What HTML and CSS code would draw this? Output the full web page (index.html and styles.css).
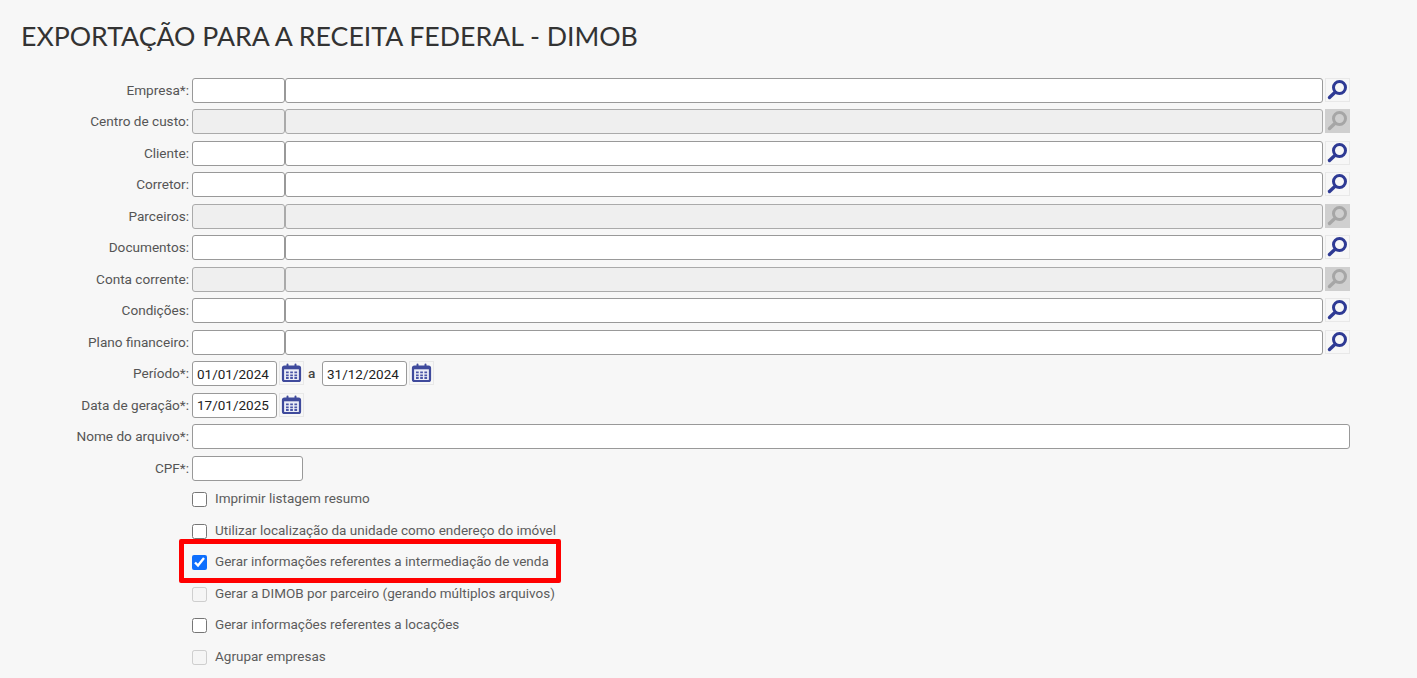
FILE: index.html
```html
<!DOCTYPE html>
<html lang="pt-BR">
<head>
<meta charset="utf-8">
<title>DIMOB</title>
<link rel="stylesheet" href="styles.css">
</head>
<body>
<svg class="defs" width="0" height="0" aria-hidden="true">
  <symbol id="lupa" viewBox="0 0 25 24">
    <circle cx="14.500" cy="9.500" r="6" fill="none" stroke="currentColor" stroke-width="3"/>
    <path d="M9.800 14.500 L4.500 19.500" fill="none" stroke="currentColor" stroke-width="3.400" stroke-linecap="round"/>
  </symbol>
  <symbol id="cal" viewBox="0 0 25 24">
    <rect x="4" y="5.500" width="17" height="14.500" rx="1.500" fill="#eceef7" stroke="#3f4a9c" stroke-width="2.200"/>
    <rect x="4" y="5.500" width="17" height="2.800" fill="#3f4a9c"/>
    <path d="M8.500 3.500v3M16.500 3.500v3" stroke="#3f4a9c" stroke-width="2" stroke-linecap="round"/>
    <path d="M7 11.300h2.700M11.200 11.300h2.700M15.400 11.300h2.700M7 14.300h2.700M11.200 14.300h2.700M15.400 14.300h2.700M7 17h2.700M11.200 17h2.700M15.400 17h2.700" stroke="#4a55a6" stroke-width="1.800"/>
  </symbol>
</svg>
<h1 class="title">EXPORTAÇÃO PARA A RECEITA FEDERAL - DIMOB</h1>
<form class="form">
  <label class="lbl">Empresa*:</label>
  <div class="field"><input class="inp code"><input class="inp desc"><button type="button" class="icon"><svg><use href="#lupa"/></svg></button></div>
  <label class="lbl">Centro de custo:</label>
  <div class="field"><input class="inp code" disabled><input class="inp desc" disabled><button type="button" class="icon off"><svg><use href="#lupa"/></svg></button></div>
  <label class="lbl">Cliente:</label>
  <div class="field"><input class="inp code"><input class="inp desc"><button type="button" class="icon"><svg><use href="#lupa"/></svg></button></div>
  <label class="lbl">Corretor:</label>
  <div class="field"><input class="inp code"><input class="inp desc"><button type="button" class="icon"><svg><use href="#lupa"/></svg></button></div>
  <label class="lbl">Parceiros:</label>
  <div class="field"><input class="inp code" disabled><input class="inp desc" disabled><button type="button" class="icon off"><svg><use href="#lupa"/></svg></button></div>
  <label class="lbl">Documentos:</label>
  <div class="field"><input class="inp code"><input class="inp desc"><button type="button" class="icon"><svg><use href="#lupa"/></svg></button></div>
  <label class="lbl">Conta corrente:</label>
  <div class="field"><input class="inp code" disabled><input class="inp desc" disabled><button type="button" class="icon off"><svg><use href="#lupa"/></svg></button></div>
  <label class="lbl">Condições:</label>
  <div class="field"><input class="inp code"><input class="inp desc"><button type="button" class="icon"><svg><use href="#lupa"/></svg></button></div>
  <label class="lbl">Plano financeiro:</label>
  <div class="field"><input class="inp code"><input class="inp desc"><button type="button" class="icon"><svg><use href="#lupa"/></svg></button></div>
  <label class="lbl">Período*:</label>
  <div class="field"><input class="inp date" value="01/01/2024"><button type="button" class="icon"><svg><use href="#cal"/></svg></button><span class="sep">a</span><input class="inp date" value="31/12/2024"><button type="button" class="icon"><svg><use href="#cal"/></svg></button></div>
  <label class="lbl">Data de geração*:</label>
  <div class="field"><input class="inp date" value="17/01/2025"><button type="button" class="icon"><svg><use href="#cal"/></svg></button></div>
  <label class="lbl">Nome do arquivo*:</label>
  <div class="field"><input class="inp full"></div>
  <label class="lbl">CPF*:</label>
  <div class="field"><input class="inp cpf"></div>
  <div class="check"><input type="checkbox"><span>Imprimir listagem resumo</span></div>
  <div class="check"><input type="checkbox"><span>Utilizar localização da unidade como endereço do imóvel</span></div>
  <div class="check"><input type="checkbox" checked><span>Gerar informações referentes a intermediação de venda</span><i class="mark"></i></div>
  <div class="check"><input type="checkbox" disabled><span>Gerar a DIMOB por parceiro (gerando múltiplos arquivos)</span></div>
  <div class="check"><input type="checkbox"><span>Gerar informações referentes a locações</span></div>
  <div class="check"><input type="checkbox" disabled><span>Agrupar empresas</span></div>
</form>
</body>
</html>
```
FILE: styles.css
```css
* { box-sizing: border-box; }
html, body { margin: 0; height: 100%; overflow: hidden; }
body { background: #f7f7f7; font-family: Roboto, "Liberation Sans", sans-serif; font-size: 13.6px; color: #555; }
.defs { position: absolute; }
.title { margin: 0; padding: 17px 0 0 21px; height: 77.9px; font-family: Lato, "Noto Sans", sans-serif; font-weight: 400; font-size: 26.7px; line-height: 38px; color: #333; white-space: nowrap; }
.form { display: grid; grid-template-columns: 189px 1158px; grid-auto-rows: 31.5px; column-gap: 3px; }
.lbl { text-align: right; line-height: 24px; white-space: nowrap; }
.field { display: flex; align-items: flex-start; height: 25px; }
.inp { height: 25px; border: 1px solid #999; border-radius: 3px; background: #fff; padding: 0 4px; font: 13.5px Roboto, sans-serif; color: #222; margin: 0; }
.inp:disabled { background: #efefef; border-color: #aaa; }
.code { width: 93px; }
.desc { width: 1038px; }
.date { width: 85px; }
.full { width: 1158px; }
.cpf { width: 111px; }
.icon { width: 25px; height: 24px; margin: 0 0 0 2px; padding: 0; border: 1px solid #e8e8e8; background: #f7f7f7; color: #2e3a94; display: block; }
.icon svg { width: 25px; height: 24px; display: block; margin: -1px; }
.icon.off { background: #cfcfcf; border-color: #cfcfcf; color: #a6a6a6; }
.sep { width: 18px; padding-left: 4px; line-height: 24px; font-weight: 500; color: #444; }
.check { grid-column: 2; display: flex; align-items: flex-start; gap: 8px; position: relative; line-height: 14px; height: 31.5px; padding-top: 3.700px; color: #5c5c5c; font-size: 13.5px; }
.check input { margin: 1px 0 0; width: 15px; height: 15px; accent-color: #0d6efd; flex: none; }
.mark { position: absolute; left: -13px; top: -11px; width: 382px; height: 44px; border: 5px solid #f00; border-radius: 2px; }
```
